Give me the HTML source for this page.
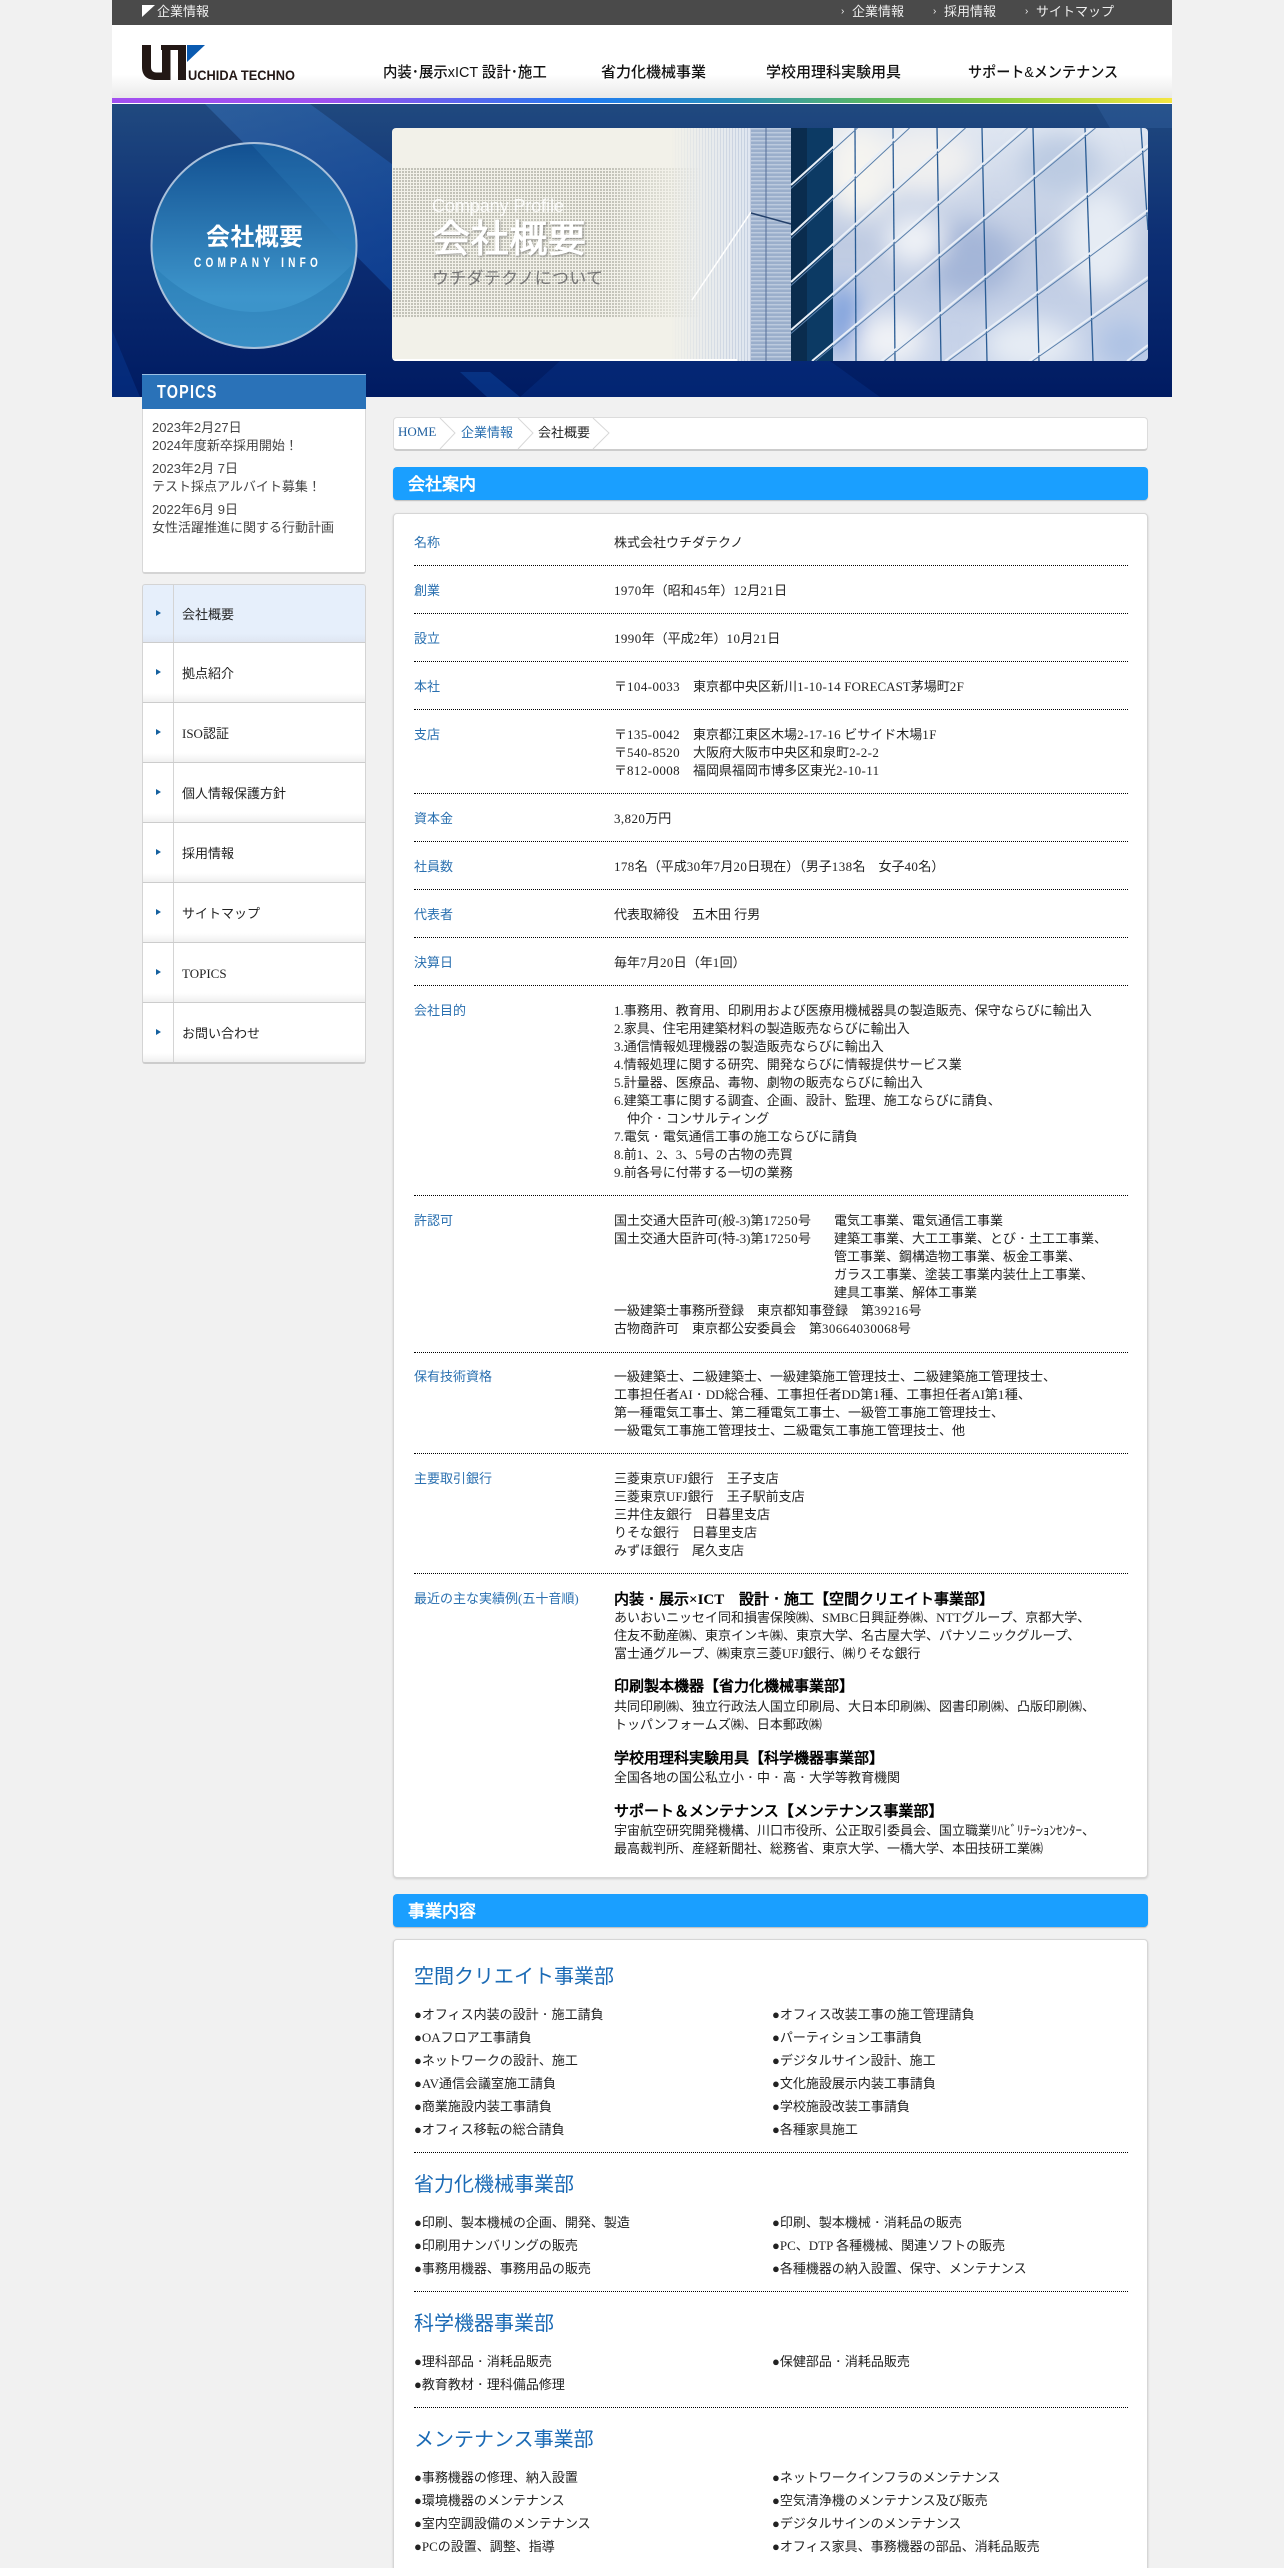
<!DOCTYPE html>
<html lang="ja"><head><meta charset="utf-8"><title>会社概要</title>
<style>
html,body{margin:0;padding:0;width:1284px;height:2568px;overflow:hidden;background:#f1f1f1}
body{position:relative;font-family:"Liberation Serif","WenQuanYi Zen Hei",serif;font-size:13px;line-height:18px;color:#222}
em{font-family:"IPAGothic","WenQuanYi Zen Hei",sans-serif;font-style:normal}
tt{font:inherit;letter-spacing:.4px}
.a{position:absolute;white-space:nowrap}
.l{position:absolute;left:414px;color:#2a70b0;white-space:nowrap;margin-top:1px}
.v{position:absolute;left:614px;white-space:nowrap;margin-top:1px}
.d{position:absolute;left:414px;width:714px;height:0;border-top:1px dotted #000}
.bar{position:absolute;left:393px;width:755px;height:33px;background:#1a9fff;border-radius:4px;color:#fff;font-weight:bold;font-size:17px;line-height:35px;text-indent:15px;box-shadow:0 1px 1px #bbb;font-family:"Liberation Sans","WenQuanYi Zen Hei",sans-serif}
.panel{position:absolute;left:393px;width:753px;background:#fff;border:1px solid #d6d6d6;border-radius:4px;box-shadow:0 1px 2px #ccc}
.b{font-size:15px;font-weight:bold;color:#000}
.h{position:absolute;left:414px;font-size:20px;line-height:30px;color:#1a6ab5;white-space:nowrap;margin-top:2px}
.nav{position:absolute;left:142px;width:222px;height:59px;background:linear-gradient(#fff 85%,#f0f0f0);border:1px solid #d4d4d4;border-top:0;border-bottom:2px solid #ccc;box-sizing:content-box}
.nav i{position:absolute;left:30px;top:0;bottom:0;border-left:1px solid #d4d4d4}
.nav b{position:absolute;left:13px;top:26px;width:0;height:0;border-left:5px solid #14609f;border-top:3.5px solid transparent;border-bottom:3.5px solid transparent}
.nav span{position:absolute;left:39px;top:22px;white-space:nowrap;color:#222}
.tb{position:absolute;top:3px;color:#eee;font-family:"Liberation Sans","WenQuanYi Zen Hei",sans-serif;white-space:nowrap}
.gn{position:absolute;top:62px;font:500 15px/22px "Liberation Sans","Noto Sans CJK JP",sans-serif;color:#111;white-space:nowrap;transform-origin:0 0}
.t{position:absolute;left:152px;color:#444;font-family:'Liberation Sans','WenQuanYi Zen Hei',sans-serif;font-size:13px;white-space:nowrap}
</style></head><body>

<!-- top bar -->
<div class="a" style="left:112px;top:0;width:1060px;height:25px;background:#4a4a4a"></div>
<svg class="a" style="left:142px;top:5px" width="13" height="13"><polygon points="0,0 13,0 0,12" fill="#fff"/></svg>
<div class="tb" style="left:157px">企業情報</div>
<div class="tb" style="left:841px;font-size:10px">›</div><div class="tb" style="left:852px">企業情報</div>
<div class="tb" style="left:933px;font-size:10px">›</div><div class="tb" style="left:944px">採用情報</div>
<div class="tb" style="left:1025px;font-size:10px">›</div><div class="tb" style="left:1036px">サイトマップ</div>

<!-- header -->
<div class="a" style="left:112px;top:25px;width:1060px;height:73px;background:linear-gradient(#fff 0,#fff 68%,#e9e9e9 100%)"></div>
<div class="a" style="left:112px;top:98px;width:1060px;height:5px;background:linear-gradient(90deg,#a24ff0 0,#a050f0 20%,#6a60f0 30%,#1f7cf0 45%,#2a90c0 58%,#5cb860 72%,#90d040 84%,#f5e642 100%)"></div>
<div class="a" style="left:112px;top:103px;width:1060px;height:1px;background:#fff"></div>

<!-- logo -->
<svg class="a" style="left:140px;top:44px" width="160" height="38" viewBox="140 44 160 38">
<path d="M142 45h9v22c0 3.500 2 5.500 5.500 5.500h4c.8 0 1.500-.1 1.500-.1V45h8.500v35H156c-9 0-14-4.500-14-13z" fill="#231815"/>
<path d="M161 45h25v35h-8V50h-17z" fill="#231815"/>
<polygon points="187,45 205,45 187,62" fill="#0a5ab0"/>
<text x="188" y="80" font-family="Liberation Sans" font-weight="bold" font-size="14" fill="#231815" textLength="107" lengthAdjust="spacingAndGlyphs">UCHIDA TECHNO</text>
</svg>

<div class="gn" style="left:383px;transform:scaleX(.96)">内装･展示xICT 設計･施工</div>
<div class="gn" style="left:601px">省力化機械事業</div>
<div class="gn" style="left:766px">学校用理科実験用具</div>
<div class="gn" style="left:968px;transform:scaleX(.94)">サポート&amp;メンテナンス</div>

<!-- hero -->
<svg class="a" style="left:112px;top:104px" width="1060" height="293" viewBox="112 104 1060 293">
<defs>
<linearGradient id="hb" x1="0" y1="0" x2="0" y2="1"><stop offset="0" stop-color="#20497f"/><stop offset=".45" stop-color="#0d2f74"/><stop offset="1" stop-color="#001b62"/></linearGradient>
<linearGradient id="st" x1="0" y1="0" x2="1" y2="1"><stop offset="0" stop-color="#3f7fc8" stop-opacity=".4"/><stop offset="1" stop-color="#1050b0" stop-opacity=".5"/></linearGradient>
<linearGradient id="ci" x1="0" y1="0" x2="0" y2="1"><stop offset="0" stop-color="#125091"/><stop offset=".75" stop-color="#3d95cb"/><stop offset="1" stop-color="#3a90c8"/></linearGradient>
<linearGradient id="ci2" x1="0" y1="0" x2="0" y2="1"><stop offset="0" stop-color="#2c80b8"/><stop offset="1" stop-color="#3a8fc6"/></linearGradient>
<clipPath id="cc"><circle cx="254" cy="245.500" r="102"/></clipPath>
<clipPath id="bn"><rect x="392" y="128" width="756" height="233" rx="4"/></clipPath>
<clipPath id="gc"><rect x="833" y="128" width="315" height="233"/></clipPath>
<pattern id="dots" width="3" height="3" patternUnits="userSpaceOnUse"><rect width="2" height="2" fill="#c2c2b8"/></pattern>
<pattern id="lou" width="3" height="4" patternUnits="userSpaceOnUse"><rect width="1" height="4" fill="#b8c4d8"/></pattern>
<pattern id="col" width="6" height="4" patternUnits="userSpaceOnUse"><rect width="6" height="4" fill="#9aaecb"/><rect width="6" height="1.500" fill="#bccade"/></pattern>
<linearGradient id="fade" x1="0" y1="0" x2="1" y2="0"><stop offset="0" stop-color="#fff"/><stop offset=".7" stop-color="#fff"/><stop offset="1" stop-color="#000"/></linearGradient>
<mask id="fm"><rect x="392" y="168" width="310" height="150" fill="url(#fade)"/></mask>
<linearGradient id="lf" x1="0" y1="0" x2="1" y2="0"><stop offset="0" stop-color="#f2f1e9"/><stop offset="1" stop-color="#dfe6f0"/></linearGradient>
<linearGradient id="lo" x1="0" y1="0" x2="1" y2="0"><stop offset="0" stop-color="#fff" stop-opacity="0"/><stop offset="1" stop-color="#fff" stop-opacity=".7"/></linearGradient>
<mask id="lm"><rect x="670" y="128" width="81" height="233" fill="url(#lo)"/></mask>
<linearGradient id="gl" x1="0" y1="0" x2="0" y2="1"><stop offset="0" stop-color="#dfe6f1"/><stop offset=".5" stop-color="#bfcbe2"/><stop offset="1" stop-color="#c8d4ea"/></linearGradient>
<filter id="bl" x="-50%" y="-50%" width="200%" height="200%"><feGaussianBlur stdDeviation="12"/></filter>
</defs>
<rect x="112" y="104" width="1060" height="293" fill="url(#hb)"/>
<polygon points="205,104 400,300 400,170 310,104" fill="url(#st)"/>
<polygon points="112,330 140,397 112,397" fill="#0a3f9c" opacity=".4"/>
<polygon points="487,397 520,397 490,372 460,372" fill="#0f4fb0" opacity=".4"/>
<polygon points="520,397 880,397 830,361 560,361" fill="#0b3a98" opacity=".3"/>
<polygon points="1096,104 1172,104 1172,128 1110,128" fill="#3f72b8" opacity=".25"/>

<!-- circle -->
<circle cx="254" cy="245.500" r="102" fill="url(#ci)"/>
<g clip-path="url(#cc)">
<polygon points="250,143 360,143 360,262" fill="#2f7fbc" opacity=".3"/>
<path d="M150 262 C185 300 225 312 255 312 C295 312 330 290 358 258 L358 350 L150 350z" fill="url(#ci2)"/>
</g>
<circle cx="254" cy="245.500" r="102.500" fill="none" stroke="#a9c0da" stroke-width="2"/>
<text x="206" y="245" font-family="Liberation Sans,Noto Sans CJK JP,sans-serif" font-size="24" font-weight="bold" fill="#fff" textLength="97">会社概要</text>
<text transform="scale(.72,1)" x="269.400" y="267" font-family="Liberation Sans,sans-serif" font-size="14" font-weight="bold" fill="#fff" textLength="172">COMPANY INFO</text>

<!-- banner -->
<g clip-path="url(#bn)">
<rect x="392" y="128" width="300" height="233" fill="#f2f1e9"/>
<rect x="670" y="128" width="81" height="233" fill="url(#lf)"/>
<rect x="392" y="168" width="310" height="150" fill="url(#dots)" mask="url(#fm)"/>
<rect x="670" y="128" width="81" height="233" fill="url(#lou)" mask="url(#lm)"/>
<line x1="692" y1="300" x2="751" y2="212" stroke="#fff" stroke-width="1.500"/>
<rect x="751" y="128" width="40" height="233" fill="url(#col)"/>
<line x1="766" y1="128" x2="766" y2="361" stroke="#566f98" stroke-width="1"/>
<line x1="751" y1="213" x2="791" y2="224" stroke="#24406a" stroke-width="1.500"/>
<rect x="791" y="128" width="42" height="233" fill="#0a2c4e"/>
<rect x="807" y="128" width="26" height="233" fill="#0c3a64"/>
<rect x="833" y="128" width="315" height="233" fill="url(#gl)"/>
<g clip-path="url(#gc)"><g filter="url(#bl)">
<ellipse cx="860" cy="170" rx="36" ry="45" fill="#f5f4f0"/>
<ellipse cx="925" cy="160" rx="50" ry="32" fill="#f0f0f0"/>
<ellipse cx="843" cy="320" rx="16" ry="36" fill="#7a9edc"/>
<ellipse cx="970" cy="260" rx="45" ry="36" fill="#a4b6d8"/>
<ellipse cx="890" cy="340" rx="35" ry="25" fill="#f0f2f6"/>
<ellipse cx="915" cy="240" rx="30" ry="25" fill="#eef1f6"/>
<ellipse cx="1030" cy="345" rx="45" ry="25" fill="#e6ecf4"/>
<ellipse cx="1100" cy="240" rx="35" ry="50" fill="#e6ecf4"/>
<ellipse cx="1060" cy="165" rx="40" ry="30" fill="#bccbe2"/>
<ellipse cx="1125" cy="345" rx="28" ry="25" fill="#afc3e4"/>
</g></g>
<g stroke="#2a5c94" stroke-width="1.300">
<line x1="855" y1="128" x2="856" y2="361"/><line x1="893" y1="128" x2="895" y2="361"/><line x1="937" y1="128" x2="941" y2="361"/><line x1="982" y1="128" x2="987" y2="361"/><line x1="1033" y1="128" x2="1039" y2="361"/><line x1="1085" y1="128" x2="1093" y2="361"/><line x1="1141" y1="128" x2="1148" y2="230"/>
</g>
<g stroke="#e9eff7" stroke-width="2" fill="none">
<path d="M791 185L854 128M791 235L906 128M791 282L962 128M791 330L1024 128M812 361L1092 128M881 361L1148 145M945 361L1148 210M1029 361L1148 277M1127 361L1148 345"/>
</g>
<g stroke="#5a80ac" stroke-width="1" fill="none">
<path d="M791 188.500L857.500 128M791 238.500L909.500 128M791 285.500L965.500 128M791 333.500L1027.500 128M815.500 361L1095.500 128M884.500 361L1148 148.500M948.500 361L1148 213.500M1032.500 361L1148 280.500M1130.500 361L1148 348.500"/>
</g>
<rect x="392" y="359" width="345" height="2" fill="#fff"/>
</g>
<text x="432" y="212" font-family="Liberation Sans,sans-serif" font-size="18" fill="#fff" fill-opacity=".85" textLength="132">Company Profile</text>
<text x="432" y="252" font-family="Liberation Sans,WenQuanYi Zen Hei,sans-serif" font-size="38" fill="#fff" textLength="154" stroke="#fff" stroke-width="1" style="filter:drop-shadow(1px 1px 1px rgba(90,90,90,.6))">会社概要</text>
<text x="432" y="284" font-family="Liberation Sans,WenQuanYi Zen Hei,sans-serif" font-size="17" fill="#777" textLength="171">ウチダテクノについて</text>
</svg>

<!-- topics -->
<div class="a" style="left:142px;top:374px;width:222px;height:197px;background:#fff;border:1px solid #d8d8d8;border-bottom:2px solid #d4d4d4;border-radius:3px"></div>
<div class="a" style="left:142px;top:374px;width:224px;height:35px;background:#2a72b8;border-top:1px solid #9cc0e4;box-sizing:border-box"></div>
<div class="a" style="left:157px;top:379px;font:bold 18px/26px 'Liberation Sans',sans-serif;color:#fff;letter-spacing:1.500px;transform:scaleX(.8);transform-origin:0 0">TOPICS</div>
<div class="t" style="top:419px">2023年2月27日<br>2024年度新卒採用開始！</div>
<div class="t" style="top:460px">2023年2月 7日<br>テスト採点アルバイト募集！</div>
<div class="t" style="top:501px">2022年6月 9日<br>女性活躍推進に関する行動計画</div>

<!-- side nav -->
<div class="nav" style="top:584px;background:linear-gradient(#e6effb 85%,#dfe6f2);border-top:1px solid #d4d4d4;height:57px;border-radius:3px 3px 0 0"><i></i><b style="top:25px"></b><span style="top:21px">会社概要</span></div>
<div class="nav" style="top:643px"><i></i><b></b><span>拠点紹介</span></div>
<div class="nav" style="top:703px"><i></i><b></b><span>ISO認証</span></div>
<div class="nav" style="top:763px"><i></i><b></b><span>個人情報保護方針</span></div>
<div class="nav" style="top:823px"><i></i><b></b><span>採用情報</span></div>
<div class="nav" style="top:883px"><i></i><b></b><span>サイトマップ</span></div>
<div class="nav" style="top:943px"><i></i><b></b><span>TOPICS</span></div>
<div class="nav" style="top:1003px;border-radius:0 0 3px 3px"><i></i><b></b><span>お問い合わせ</span></div>

<!-- breadcrumb -->
<div class="a" style="left:393px;top:417px;width:753px;height:31px;background:#fff;border:1px solid #dcdcdc;border-bottom:2px solid #ccc;border-radius:4px"></div>
<svg class="a" style="left:393px;top:418px" width="240" height="32"><path d="M47 0L62 15L47 31M125 0L140 15L125 31M200 0L216 15L200 31" fill="none" stroke="#d8d8d8"/></svg>
<div class="a" style="left:398px;top:423px;color:#1f5f9f">HOME</div>
<div class="a" style="left:461px;top:424px;color:#2a70b0">企業情報</div>
<div class="a" style="left:538px;top:424px">会社概要</div>

<!-- 会社案内 -->
<div class="bar" style="top:467px">会社案内</div>
<div class="panel" style="top:513px;height:1363px"></div>

<div class="l" style="top:533px">名称</div><div class="v" style="top:533px">株式会社ウチダテクノ</div>
<div class="d" style="top:565px"></div>
<div class="l" style="top:581px">創業</div><div class="v" style="top:581px"><tt>1970</tt>年（昭和<tt>45</tt>年）<tt>12</tt>月<tt>21</tt>日</div>
<div class="d" style="top:613px"></div>
<div class="l" style="top:629px">設立</div><div class="v" style="top:629px"><tt>1990</tt>年（平成<tt>2</tt>年）<tt>10</tt>月<tt>21</tt>日</div>
<div class="d" style="top:661px"></div>
<div class="l" style="top:677px">本社</div><div class="v" style="top:677px">〒<tt>104-0033</tt>　東京都中央区新川<tt>1-10-14</tt> FORECAST茅場町<tt>2</tt>F</div>
<div class="d" style="top:709px"></div>
<div class="l" style="top:725px">支店</div><div class="v" style="top:725px">〒<tt>135-0042</tt>　東京都江東区木場<tt>2-17-16</tt> ビサイド木場<tt>1</tt>F<br>〒<tt>540-8520</tt>　大阪府大阪市中央区和泉町<tt>2-2-2</tt><br>〒<tt>812-0008</tt>　福岡県福岡市博多区東光<tt>2-10-11</tt></div>
<div class="d" style="top:793px"></div>
<div class="l" style="top:809px">資本金</div><div class="v" style="top:809px"><tt>3,820</tt>万円</div>
<div class="d" style="top:841px"></div>
<div class="l" style="top:857px">社員数</div><div class="v" style="top:857px"><tt>178</tt>名（平成<tt>30</tt>年<tt>7</tt>月<tt>20</tt>日現在）（男子<tt>138</tt>名　女子<tt>40</tt>名）</div>
<div class="d" style="top:889px"></div>
<div class="l" style="top:905px">代表者</div><div class="v" style="top:905px">代表取締役　五木田 行男</div>
<div class="d" style="top:937px"></div>
<div class="l" style="top:953px">決算日</div><div class="v" style="top:953px">毎年<tt>7</tt>月<tt>20</tt>日（年<tt>1</tt>回）</div>
<div class="d" style="top:985px"></div>
<div class="l" style="top:1001px">会社目的</div><div class="v" style="top:1001px">1.事務用、教育用、印刷用および医療用機械器具の製造販売、保守ならびに輸出入<br>2.家具、住宅用建築材料の製造販売ならびに輸出入<br>3.通信情報処理機器の製造販売ならびに輸出入<br>4.情報処理に関する研究、開発ならびに情報提供サービス業<br>5.計量器、医療品、毒物、劇物の販売ならびに輸出入<br>6.建築工事に関する調査、企画、設計、監理、施工ならびに請負、<br>　仲介<em>・</em>コンサルティング<br>7.電気<em>・</em>電気通信工事の施工ならびに請負<br>8.前1、2、3、5号の古物の売買<br>9.前各号に付帯する一切の業務</div>
<div class="d" style="top:1195px"></div>
<div class="l" style="top:1211px">許認可</div><div class="v" style="top:1211px">国土交通大臣許可(般-3)第<tt>17250</tt>号<br>国土交通大臣許可(特-3)第<tt>17250</tt>号<br><br><br><br>一級建築士事務所登録　東京都知事登録　第<tt>39216</tt>号<br>古物商許可　東京都公安委員会　第<tt>30664030068</tt>号</div>
<div class="v" style="top:1211px;left:834px">電気工事業、電気通信工事業<br>建築工事業、大工工事業、とび<em>・</em>土工工事業、<br>管工事業、鋼構造物工事業、板金工事業、<br>ガラス工事業、塗装工事業内装仕上工事業、<br>建具工事業、解体工事業</div>
<div class="d" style="top:1352px"></div>
<div class="l" style="top:1367px">保有技術資格</div><div class="v" style="top:1367px">一級建築士、二級建築士、一級建築施工管理技士、二級建築施工管理技士、<br>工事担任者AI<em>・</em>DD総合種、工事担任者DD第<tt>1</tt>種、工事担任者AI第<tt>1</tt>種、<br>第一種電気工事士、第二種電気工事士、一級管工事施工管理技士、<br>一級電気工事施工管理技士、二級電気工事施工管理技士、他</div>
<div class="d" style="top:1453px"></div>
<div class="l" style="top:1469px">主要取引銀行</div><div class="v" style="top:1469px">三菱東京UFJ銀行　王子支店<br>三菱東京UFJ銀行　王子駅前支店<br>三井住友銀行　日暮里支店<br>りそな銀行　日暮里支店<br>みずほ銀行　尾久支店</div>
<div class="d" style="top:1573px"></div>
<div class="l" style="top:1589px">最近の主な実績例(五十音順)</div>
<div class="v b" style="top:1589px">内装<em>・</em>展示×ICT　設計<em>・</em>施工【空間クリエイト事業部】</div>
<div class="v" style="top:1608px">あいおいニッセイ同和損害保険㈱、SMBC日興証券㈱、NTTグループ、京都大学、<br>住友不動産㈱、東京インキ㈱、東京大学、名古屋大学、パナソニックグループ、<br>富士通グループ、㈱東京三菱UFJ銀行、㈱りそな銀行</div>
<div class="v b" style="top:1677px">印刷製本機器【省力化機械事業部】</div>
<div class="v" style="top:1697px">共同印刷㈱、独立行政法人国立印刷局、大日本印刷㈱、図書印刷㈱、凸版印刷㈱、<br>トッパンフォームズ㈱、日本郵政㈱</div>
<div class="v b" style="top:1749px">学校用理科実験用具【科学機器事業部】</div>
<div class="v" style="top:1768px">全国各地の国公私立小<em>・</em>中<em>・</em>高<em>・</em>大学等教育機関</div>
<div class="v b" style="top:1802px">サポート＆メンテナンス【メンテナンス事業部】</div>
<div class="v" style="top:1821px">宇宙航空研究開発機構、川口市役所、公正取引委員会、国立職業ﾘﾊﾋﾞﾘﾃｰｼｮﾝｾﾝﾀｰ、<br>最高裁判所、産経新聞社、総務省、東京大学、一橋大学、本田技研工業㈱</div>

<!-- 事業内容 -->
<div class="bar" style="top:1894px">事業内容</div>
<div class="panel" style="top:1939px;height:700px"></div>

<div class="h" style="top:1960px">空間クリエイト事業部</div>
<div class="a" style="left:414px;top:2003px;line-height:23px">●オフィス内装の設計<em>・</em>施工請負<br>●OAフロア工事請負<br>●ネットワークの設計、施工<br>●AV通信会議室施工請負<br>●商業施設内装工事請負<br>●オフィス移転の総合請負</div>
<div class="a" style="left:772px;top:2003px;line-height:23px">●オフィス改装工事の施工管理請負<br>●パーティション工事請負<br>●デジタルサイン設計、施工<br>●文化施設展示内装工事請負<br>●学校施設改装工事請負<br>●各種家具施工</div>
<div class="d" style="top:2152px"></div>

<div class="h" style="top:2168px">省力化機械事業部</div>
<div class="a" style="left:414px;top:2211px;line-height:23px">●印刷、製本機械の企画、開発、製造<br>●印刷用ナンバリングの販売<br>●事務用機器、事務用品の販売</div>
<div class="a" style="left:772px;top:2211px;line-height:23px">●印刷、製本機械<em>・</em>消耗品の販売<br>●PC、DTP 各種機械、関連ソフトの販売<br>●各種機器の納入設置、保守、メンテナンス</div>
<div class="d" style="top:2291px"></div>

<div class="h" style="top:2307px">科学機器事業部</div>
<div class="a" style="left:414px;top:2350px;line-height:23px">●理科部品<em>・</em>消耗品販売<br>●教育教材<em>・</em>理科備品修理</div>
<div class="a" style="left:772px;top:2350px;line-height:23px">●保健部品<em>・</em>消耗品販売</div>
<div class="d" style="top:2407px"></div>

<div class="h" style="top:2423px">メンテナンス事業部</div>
<div class="a" style="left:414px;top:2466px;line-height:23px">●事務機器の修理、納入設置<br>●環境機器のメンテナンス<br>●室内空調設備のメンテナンス<br>●PCの設置、調整、指導</div>
<div class="a" style="left:772px;top:2466px;line-height:23px">●ネットワークインフラのメンテナンス<br>●空気清浄機のメンテナンス及び販売<br>●デジタルサインのメンテナンス<br>●オフィス家具、事務機器の部品、消耗品販売</div>

</body></html>
